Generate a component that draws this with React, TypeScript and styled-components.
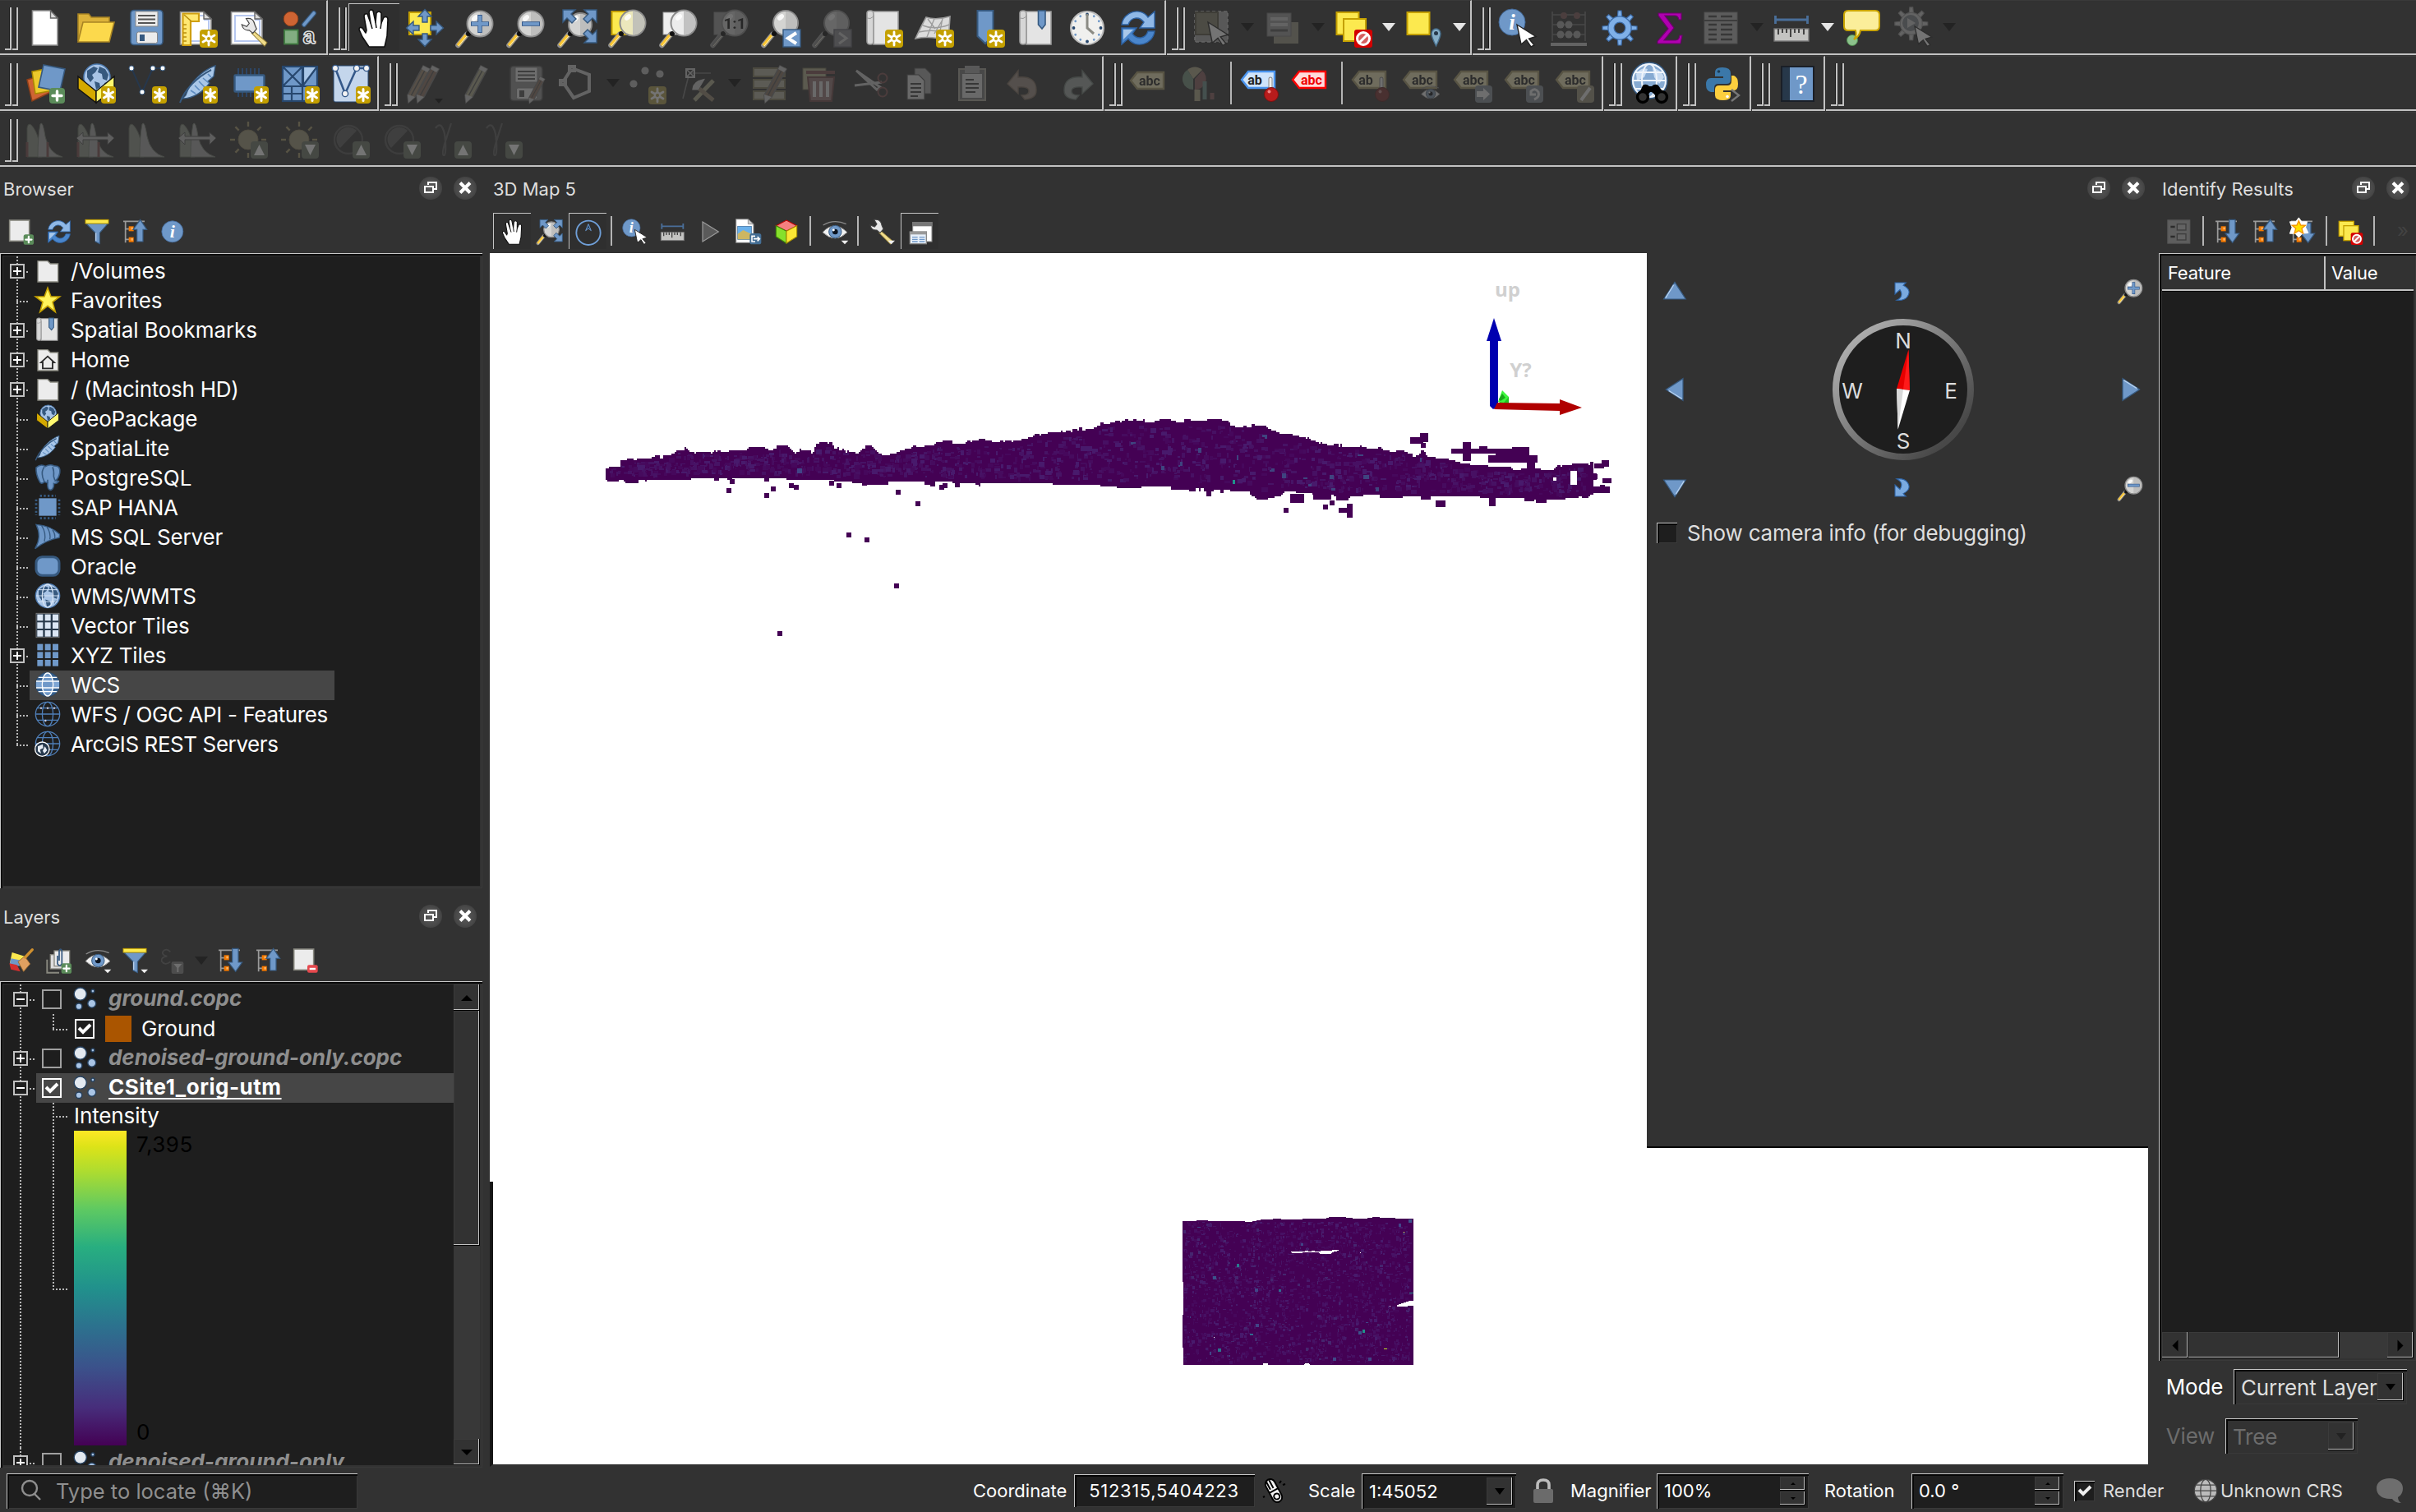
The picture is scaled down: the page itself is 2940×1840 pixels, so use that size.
import React from "react";
import styled, { createGlobalStyle, css } from "styled-components";

const C = {
  bg: "#323232",
  list: "#1e1e1e",
  light: "#c2c2c2",
  blue: "#6f98c8",
  navy: "#36597f",
  yellow: "#fce94f",
  gold: "#c4a000",
  text: "#dedede",
};

const Global = createGlobalStyle`
  *{box-sizing:border-box}
  html,body{margin:0;padding:0;background:${C.bg}}
  body{font-family:Inter,"Liberation Sans","DejaVu Sans",sans-serif;color:${C.text};overflow:hidden}
`;

const sunken = css`
  box-shadow: inset 1px 1px 0 #c8c8c8, inset 3px 3px 0 #060606, inset -1px -1px 0 #393939;
`;
const raised = css`
  background: ${C.bg};
  box-shadow: inset -1px -1px 0 #000, inset -2px -2px 0 ${C.light}, inset 1px 1px 0 #3b3b3b;
`;

/* ---------- icon artwork, drawn on a 48 unit grid ---------- */

const NewBadge = ({ x = 26, y = 26 }: { x?: number; y?: number }) => (
  <g transform={`translate(${x} ${y})`}>
    <rect width="22" height="22" rx="4" fill={C.gold} />
    <path d="M11 3v16M4 7l14 8M18 7l-14 8" stroke="#fff" strokeWidth="2.8" strokeLinecap="round" />
    <circle cx="11" cy="11" r="4.4" fill="#fff" />
    <circle cx="11" cy="11" r="2" fill={C.gold} />
  </g>
);
const StarBadge = ({ x = 30, y = 27 }: { x?: number; y?: number }) => (
  <g transform={`translate(${x} ${y})`}>
    <rect width="18" height="21" rx="4" fill={C.gold} />
    <path d="M9 3.5v14M3.5 7l11 7M14.5 7l-11 7" stroke="#fff" strokeWidth="3" strokeLinecap="round" />
  </g>
);
const GreenPlus = ({ x = 28, y = 28, s = 1 }: { x?: number; y?: number; s?: number }) => (
  <g transform={`translate(${x} ${y}) scale(${s})`}>
    <rect width="19" height="19" rx="4" fill="#5b8c5a" />
    <path d="M9.500 4v11M4 9.500h11" stroke="#fff" strokeWidth="3.400" strokeLinecap="round" />
  </g>
);
const NoBadge = () => (
  <g>
    <rect x="25" y="26" width="22" height="22" rx="3" fill="#d40000" />
    <circle cx="36" cy="37" r="7.500" fill="#d46060" stroke="#fff" strokeWidth="3" />
    <path d="M31 42l10-10" stroke="#fff" strokeWidth="3" />
  </g>
);
const Lens = ({ dim = false, cx = 29, cy = 19, r = 15.5, tint = "" }: { dim?: boolean; cx?: number; cy?: number; r?: number; tint?: string }) => (
  <g>
    <path d="M2.500 45L13 32" stroke={dim ? "#999" : "#8f8f8f"} strokeWidth="6.500" strokeLinecap="round" />
    <path d="M2 45.500L12 33" stroke={dim ? "#888" : "#fcc630"} strokeWidth="3.800" />
    <path d="M3 46L13 34" stroke="#fff3c0" strokeWidth="1" />
    <circle cx="15" cy="31" r="3" fill="#111" />
    <circle cx={cx} cy={cy} r={r} fill={tint || "#d4d4d2"} stroke="#8c8c8c" strokeWidth="2" />
    <path d={`M${cx} ${cy - r + 1}a${r - 1} ${r - 1} 0 0 1 0 ${2 * r - 2}z`} fill="#b8b8b8" opacity=".8" />
    <ellipse cx={cx - 6} cy={cy - 7} rx="4.500" ry="3" fill="#fff" opacity=".85" transform={`rotate(-40 ${cx - 6} ${cy - 7})`} />
  </g>
);
const Cursor = ({ x = 23, y = 20, s = 1 }: { x?: number; y?: number; s?: number }) => (
  <path transform={`translate(${x} ${y}) scale(${s})`} d="M0 0L23 14.500L14.500 17L21 25L17 27L11.500 18.500L5 24Z" fill="#fff" stroke="#222" strokeWidth="1.400" />
);
const Scroll = () => (
  <g>
    <path d="M9 4H42V44H12V9Z" fill="#e4e4e4" stroke="#9a9a9a" strokeWidth="1.600" />
    <path d="M4 6q0-3 4-3t4 4V40q0 4-4 4t-4-4z" fill="#d6d6d6" stroke="#9a9a9a" strokeWidth="1.600" />
    <path d="M4 12q4 2 8-2" stroke="#9a9a9a" fill="none" />
  </g>
);
const Page = () => (
  <g>
    <path d="M2.500 4.500H31L40 13V44H2.500Z" fill="#fff" stroke="#8a8a8a" strokeWidth="1.600" />
    <path d="M7 9h25v5h5v26H7z" fill="none" stroke="#b7c8f0" strokeWidth="2" />
    <path d="M31 4.500V13H40Z" fill="#d8d8d8" stroke="#666" strokeWidth="1.400" />
  </g>
);
const Globe = ({ cx = 24, cy = 24, r = 20, c = "#4f87c7", fill = "none" }: { cx?: number; cy?: number; r?: number; c?: string; fill?: string }) => (
  <g stroke={c} strokeWidth="2" fill="none">
    <circle cx={cx} cy={cy} r={r} fill={fill} />
    <ellipse cx={cx} cy={cy} rx={r * 0.45} ry={r} />
    <path d={`M${cx - r} ${cy}H${cx + r}M${cx - r * 0.85} ${cy - r * 0.5}H${cx + r * 0.85}M${cx - r * 0.85} ${cy + r * 0.5}H${cx + r * 0.85}`} />
  </g>
);
const Earth = ({ cx = 24, cy = 17, r = 16 }: { cx?: number; cy?: number; r?: number }) => (
  <g transform={`translate(${cx} ${cy}) scale(${r / 16})`}>
    <circle r="16" fill="#a8c4e6" stroke="#4b78ad" strokeWidth="1.500" />
    <path d="M-12-8l8-5 5 2-3 5-4 3 2 4-4 5-4-6zM3-13l7 3 4 7-2 7-5-2-1-6-5-2zM-3 5l6 2 1 5-5 3zM9 7l3-1-3 5z" fill="#36597f" />
  </g>
);
const Refresh = () => (
  <g stroke="#2d62a3" strokeWidth="1.400">
    <path d="M4 20C6 4 27-2 36 11L44 4V24H26L31 17C25 9 15 11 12 20Z" fill="#8fb8e6" />
    <path d="M44 28C42 44 21 50 12 37L4 44V24H22L17 31C23 39 33 37 36 28Z" fill="#4a86cc" />
    <path d="M6 38V26H18L6 38Z" fill="#a9c8ea" stroke="none" />
  </g>
);
const TreeLines = () => (
  <g>
    <path d="M3 5H42M7 5V44M7 19H16M7 38H16" stroke="#9a9a9a" strokeWidth="2.600" fill="none" />
    <rect x="13" y="14" width="9" height="9" fill="#f57900" />
    <rect x="13" y="34" width="9" height="9" fill="#f57900" />
    <rect x="17" y="16" width="4" height="4" fill="#fcb05e" />
    <rect x="17" y="36" width="4" height="4" fill="#fcb05e" />
  </g>
);
const Feather = () => (
  <g>
    <path d="M45 2C30 7 14 22 9 38L5 42C19 42 32 32 38 23L36 21L43 15Z" fill="#a9c7e8" stroke="#36597f" strokeWidth="1.400" />
    <path d="M2 47C8 30 24 15 40 7" stroke="#36597f" strokeWidth="2" fill="none" />
    <path d="M36 12l4 4M30 17l7 6M25 21l7 7M20 26l6 6M15 32l6 4" stroke="#5e8cc0" strokeWidth="1.600" />
  </g>
);
const Box = () => (
  <g>
    <Earth cx={25} cy={16} r={16} />
    <path d="M2 15L24 33V47L2 30Z" fill="#d4a900" stroke="#111" strokeWidth="1.400" />
    <path d="M46 15L24 33V47L46 30Z" fill="#fff86f" stroke="#111" strokeWidth="1.400" />
  </g>
);
const Funnel = () => (
  <g>
    <path d="M4 9H44L29 26V46L21 42V26Z" fill={C.blue} stroke={C.navy} strokeWidth="1.600" />
    <path d="M22 26V41" stroke="#b9d0ea" strokeWidth="2" />
    <rect x="3" y="2" width="42" height="7" fill={C.yellow} stroke={C.gold} strokeWidth="1.400" />
  </g>
);
const Eye = () => (
  <g>
    <path d="M2 12Q22 0 44 10" stroke="#8a8a8a" strokeWidth="2" fill="none" />
    <path d="M1 25Q22 2 46 25Q24 47 1 25Z" fill="#f2f2f2" stroke="#888" strokeWidth="1.500" />
    <circle cx="24" cy="24" r="11.500" fill={C.blue} stroke={C.navy} strokeWidth="1.500" />
    <circle cx="24" cy="24" r="5" fill="#0b1320" />
    <circle cx="21" cy="21" r="2.200" fill="#fff" />
  </g>
);
const MiniArrow = () => <path d="M35 40H48L41.500 47Z" fill="#eee" />;
const Hand = () => (
  <g>
    <path d="M17 47L9 35L5 26Q5 22 9 24L13 30L14 27L11 10Q11 6 15 7L19 18L17 5Q18 0 22 3L25 17L26 6Q29 2 32 6V18L35 11Q40 9 40 14L39 34L36 47Z" fill="#fff" stroke="#111" strokeWidth="1.600" strokeLinejoin="round" />
    <path d="M19 18L21 25M25 17L26 24M32 18L31 25" stroke="#111" strokeWidth="1.500" />
  </g>
);
const Wrench = () => (
  <g>
    <path d="M22 22L44 41L40 47L19 26Z" fill="#f1dd8a" stroke="#8d7a35" strokeWidth="1.400" />
    <path d="M10 2Q22 0 24 12L27 19L21 26L15 21Q5 22 3 12L11 15L15 10Z" fill="#e8e8e8" stroke="#444" strokeWidth="1.600" />
  </g>
);
const FullArrows = () => (
  <g fill={C.blue} stroke={C.navy} strokeWidth="1.400">
    <path d="M6 2H21L16 7L22 13L17 18L11 12L6 17Z" />
    <path d="M47 2V17L42 12L36 18L31 13L37 7L32 2Z" />
    <path d="M47 42H32L37 37L31 31L36 26L42 32L47 27Z" />
  </g>
);
const Folder = () => <path d="M6 7H24L29 12H43V45H6Z" fill="#ececec" stroke="#88887f" strokeWidth="2" />;
const Tag = ({ fill = "#fbe98a", stroke = "#b59c3a", color = "#222", text = "abc" }: { fill?: string; stroke?: string; color?: string; text?: string }) => (
  <g>
    <path d="M1 19L9 9H41V29H9Z" fill={fill} stroke={stroke} strokeWidth="2.400" />
    <text x={text === "ab" ? 17 : 24} y="24.500" fontSize="16" fontWeight="700" textAnchor="middle" fill={color} fontFamily="Roboto, sans-serif">{text}</text>
  </g>
);
const Pin = () => (
  <g>
    <path d="M36 18V34" stroke="#888" strokeWidth="5" strokeLinecap="round" />
    <path d="M36 18V34" stroke="#eee" strokeWidth="3" strokeLinecap="round" />
    <circle cx="37" cy="37" r="8.500" fill="#b71c1c" stroke="#7c1010" />
    <circle cx="34.500" cy="33.500" r="2" fill="#f08080" />
  </g>
);
const Pencil = ({ x = 0, c = "#b58a5a" }: { x?: number; c?: string }) => (
  <g transform={`translate(${x} 0)`}>
    <path d="M28 2L36 6L18 40L10 47L9 38Z" fill={c} stroke="#777" strokeWidth="1.600" />
    <path d="M9 37L18 40L10 47Z" fill="#ccc" />
    <path d="M32 4L13.500 38" stroke="#555" strokeWidth="1.400" />
    <path d="M28 2L36 6L33 10L26 6Z" fill="#ccc" />
  </g>
);
const Gear = ({ c = "#6f9fd8", s = "#3c6aa5" }: { c?: string; s?: string }) => (
  <g>
    {[0, 45, 90, 135, 180, 225, 270, 315].map((a) => (
      <path key={a} transform={`rotate(${a} 24 24)`} d="M21 14L22 3H26L27 14Z" fill={c} stroke={s} strokeWidth="1.200" />
    ))}
    <circle cx="24" cy="24" r="10.500" fill="none" stroke={s} strokeWidth="8.500" />
    <circle cx="24" cy="24" r="10.500" fill="none" stroke={c} strokeWidth="6" />
  </g>
);
const Ruler = () => (
  <g>
    <path d="M3 14H43M3.500 9V19M42.500 9V19" stroke="#4a6f9a" strokeWidth="2.800" />
    <rect x="2" y="25" width="42" height="15" fill="#c4c4c2" stroke="#777" strokeWidth="1.400" />
    <path d="M7 25v7M12 25v5M17 25v5M22 25v10M27 25v5M32 25v5M38 25v7" stroke="#444" strokeWidth="2" />
  </g>
);
const Info = () => (
  <g>
    <circle cx="17" cy="17" r="16" fill={C.blue} stroke="#42699a" strokeWidth="1" />
    <text x="17" y="26" fontSize="27" fontStyle="italic" fontWeight="700" textAnchor="middle" fill="#fff" fontFamily="Liberation Serif, serif">i</text>
  </g>
);
const Floppy = () => (
  <g>
    <rect x="4" y="2.500" width="39" height="42" rx="4" fill={C.blue} stroke={C.navy} strokeWidth="1.600" />
    <rect x="10" y="4" width="27" height="18" fill="#ececec" stroke="#888" />
    <path d="M13 9H34M13 13.500H34M13 18H34" stroke="#555" strokeWidth="1.800" />
    <rect x="11.500" y="29" width="25" height="13.500" rx="2" fill="#ececec" stroke="#888" />
    <rect x="15" y="32" width="6" height="8" fill="#36597f" />
  </g>
);
const Hist = ({ cut = false, arrow = false }: { cut?: boolean; arrow?: boolean }) => (
  <g transform="translate(-1 0)">
    <path d="M3 45V10Q4 3 8 6Q14 12 17 24Q20 36 21 45Z" fill="#8a9a80" stroke="#5f6c50" />
    <path d="M16 45Q16 20 19 5Q22 0 25 20Q29 40 46 45Z" fill="#aaa" stroke="#6f7f66" />
    {cut && <path d="M3 27V45M28 27V45" stroke="#a04646" strokeWidth="3" />}
    {arrow && <path d="M1 22L9 15V20H39V15L47 22L39 30V24H9V30Z" fill="#bbb" stroke="#555" />}
  </g>
);
const UpDown = ({ down = false }: { down?: boolean }) => (
  <g>
    <rect x="26" y="26" width="21" height="21" rx="4" fill="#667a5c" />
    <path d={down ? "M30 30H43L36.500 43Z" : "M30 43H43L36.500 30Z"} fill="#fff" />
  </g>
);
const Sun = ({ down = false }: { down?: boolean }) => (
  <g>
    {[0, 45, 90, 135, 180, 225, 270, 315].map((a) => (
      <path key={a} transform={`rotate(${a} 23 24)`} d="M23 2V8" stroke="#b59a3d" strokeWidth="2.400" />
    ))}
    <circle cx="23" cy="24" r="12" fill="#a89860" stroke="#97803a" />
    <UpDown down={down} />
  </g>
);
const Contrast = ({ down = false }: { down?: boolean }) => (
  <g>
    <circle cx="21" cy="24" r="17" fill="none" stroke="#565656" strokeWidth="2.400" />
    <path d="M11 34A14.500 14.500 0 0 1 31 13Z" fill="#5c5c5c" />
    <UpDown down={down} />
  </g>
);
const Gamma = ({ down = false }: { down?: boolean }) => (
  <g>
    <path d="M3 10Q10 0 14 17L15 26Q10 42 13 43Q16 43 15 26L22 4" fill="none" stroke="#5c5c5c" strokeWidth="2.200" />
    <UpDown down={down} />
  </g>
);
const Undo = () => <path d="M3 24L16 8V16Q38 14 38 32Q38 42 24 43L20 38Q30 38 29 32Q28 27 16 28V36Z" fill="#a98a78" stroke="#8f6a4c" strokeWidth="1.400" />;
const Squares = () => (
  <g fill={C.yellow} stroke={C.gold} strokeWidth="2">
    <rect x="3.500" y="5" width="27" height="27" />
    <rect x="12" y="13" width="27" height="27" />
  </g>
);
const Triangle = ({ rot }: { rot: number }) => (
  <g transform={`rotate(${rot} 24 24)`}>
    <path d="M24 8L44 39H4Z" fill={C.blue} stroke={C.navy} strokeWidth="1.800" />
    <path d="M22 13L7 37" stroke="#b9d3f0" strokeWidth="2" />
  </g>
);
const CubeGrid = ({ fill = C.blue, s = "none" }: { fill?: string; s?: string }) => (
  <g fill={fill} stroke={s} strokeWidth="1.400">
    {[0, 1, 2].map((r) => [0, 1, 2].map((c) => <rect key={`${r}${c}`} x={5 + c * 14} y={4 + r * 14.500} width="10.500" height="11.500" />))}
  </g>
);

const art: Record<string, React.ReactNode> = {
  newFile: (
    <g>
      <path d="M8.500 3H30.500L39 12V45H8.500Z" fill="#fff" stroke="#8e8e8e" strokeWidth="1.600" />
      <path d="M30.500 3V12H39Z" fill="#ddd" stroke="#666" strokeWidth="1.400" />
    </g>
  ),
  open: (
    <g stroke="#a88423" strokeWidth="1.600">
      <path d="M2 40V7H15L18 11H40V17" fill="#dcb23a" />
      <path d="M8 17H46L40 41H2Z" fill="#fcd94c" />
    </g>
  ),
  save: <Floppy />,
  newLayout: (
    <g>
      <Page />
      <path d="M5.500 6.500H25V16H15V45H5.500Z" fill="#ffe872" stroke="#d0a010" strokeWidth="2.200" />
      <path d="M6 20h4M6 25h4M6 30h4M6 35h4M6 40h4M7 8l9 8" stroke="#b98d0d" strokeWidth="1.600" />
      <NewBadge />
    </g>
  ),
  layouts: (
    <g>
      <Page />
      <g transform="translate(13 11) scale(.75)"><Wrench /></g>
    </g>
  ),
  style: (
    <g>
      <circle cx="13" cy="13" r="8.800" fill="#cf6433" stroke="#8f3f18" />
      <path d="M29 20L41 6" stroke={C.navy} strokeWidth="6" strokeLinecap="round" />
      <path d="M29 20L41 6" stroke={C.blue} strokeWidth="3.600" strokeLinecap="round" />
      <rect x="5" y="26.500" width="16.500" height="17" fill="#82ad82" stroke="#3f7a40" strokeWidth="1.800" />
      <text x="35" y="43" fontSize="27" fontWeight="700" textAnchor="middle" fill="#333" stroke="#ddd" strokeWidth="1.600" fontFamily="Liberation Sans, sans-serif">a</text>
    </g>
  ),
  hand: <Hand />,
  panSel: (
    <g>
      <rect x="5" y="5" width="26" height="27" fill={C.yellow} stroke={C.gold} strokeWidth="2" />
      <g fill={C.blue} stroke={C.navy} strokeWidth="1.400">
        {[0, 90, 180, 270].map((a) => <path key={a} transform={`rotate(${a} 24 24)`} d="M24 1.500L32 10H27V17H21V10H16Z" />)}
      </g>
    </g>
  ),
  zoomIn: <g><Lens /><path d="M29 8V30M18 19H40" stroke="#35598a" strokeWidth="5.600" /><path d="M29 9V29M19 19H39" stroke={C.blue} strokeWidth="3.800" /></g>,
  zoomOut: <g><Lens /><path d="M18 19H40" stroke="#35598a" strokeWidth="5.600" /><path d="M19 19H39" stroke={C.blue} strokeWidth="3.800" /></g>,
  zoomFull: <g><Lens cx={27} cy={20} r={14} /><FullArrows /></g>,
  zoomSel: <g><rect x="3.500" y="4" width="26" height="28" fill={C.yellow} stroke={C.gold} strokeWidth="2" /><Lens tint="#ece8bc" cy={18} /></g>,
  zoomLayer: <g><rect x="4" y="5" width="26" height="27" fill="#eee" stroke="#999" /><Lens tint="#ececec" cy={18} /></g>,
  zoomNative: <g><rect x="4" y="5" width="26" height="27" fill="#999" stroke="#888" /><Lens dim cy={18} /><text x="29" y="25" fontSize="19" fontWeight="700" textAnchor="middle" fill="#111" fontFamily="Roboto, sans-serif">1:1</text></g>,
  zoomLast: <g><Lens cy={18} r={15} /><rect x="26" y="26" width="21" height="21" fill={C.blue} stroke={C.navy} strokeWidth="1.400" /><path d="M42 30L32 36.500L42 43" fill="none" stroke="#fff" strokeWidth="4" /></g>,
  zoomNext: <g><Lens dim cy={18} r={15} /><rect x="26" y="26" width="21" height="21" fill="#889" stroke="#667" strokeWidth="1.400" /><path d="M32 30L41 36.500L32 43" fill="none" stroke="#ccc" strokeWidth="3" /></g>,
  newMap: <g><Scroll /><NewBadge /></g>,
  new3d: (
    <g>
      <path d="M14 11Q26 15 43 10L41 40Q20 33 1 37Q8 22 14 11Z" fill="#dcdcdc" stroke="#9c9c9c" strokeWidth="1.600" />
      <path d="M24 13Q20 22 15 35M34 12Q32 24 29 36M10 21Q24 27 42 20M5 29Q22 25 41 30M16 13L25 25M34 14L24 31" fill="none" stroke="#9c9c9c" strokeWidth="1.400" />
      <NewBadge />
    </g>
  ),
  newBookmark: <g><path d="M14.500 3H33.500V34L24 43L14.500 34Z" fill={C.blue} stroke={C.navy} strokeWidth="2" /><NewBadge /></g>,
  bookmarks: <g><Scroll /><path d="M26.500 3H35V20L31 25L26.500 20Z" fill={C.blue} stroke={C.navy} strokeWidth="1.600" /></g>,
  clock: (
    <g>
      <circle cx="24" cy="24" r="20" fill="#f0f0ee" stroke="#bbb" strokeWidth="2" />
      {[...Array(12)].map((_, i) => <circle key={i} transform={`rotate(${i * 30} 24 24)`} cx="24" cy="7.500" r={i % 3 ? 1.400 : 1.900} fill={i % 3 ? C.blue : "#27476e"} />)}
      <path d="M24 7V24L32 31" fill="none" stroke="#8b8b84" strokeWidth="3" />
    </g>
  ),
  refresh: <Refresh />,
  select: <g><rect x="3" y="4" width="40" height="37" fill="#aaa" stroke="#ccc" strokeWidth="1.600" strokeDasharray="4 3" /><rect x="4" y="5" width="27" height="27" fill="#8a8256" stroke="#5f5630" strokeWidth="2" /><Cursor x={19} y={17} s={1.05} /></g>,
  form: <g><rect x="13" y="17" width="30" height="26" fill="#9c9574" /><rect x="5" y="6" width="29" height="28" fill="#999" stroke="#777" /><path d="M9 13H30M9 20H30" stroke="#ccc" strokeWidth="4" /><path d="M9 27H30" stroke="#555" strokeWidth="3" /></g>,
  deselect: <g><Squares /><NoBadge /></g>,
  selectLoc: <g><rect x="3.500" y="5" width="27" height="27" fill={C.yellow} stroke={C.gold} strokeWidth="2" /><path d="M38.500 46Q33 35 33 31A5.500 6 0 0 1 44 31Q44 35 38.500 46Z" fill="#86aec8" stroke="#486f8c" strokeWidth="1.400" /><circle cx="38.500" cy="30.500" r="2.500" fill="#27384a" /></g>,
  identify: <g><Info /><Cursor /></g>,
  abacus: <g stroke="#777" strokeWidth="1.600" fill="#aaa"><path d="M4 4V40M44 4V40M4 8H44M4 20H44M4 32H44" /><path d="M2 44H46" strokeWidth="4" stroke="#ccc" /><g stroke="none"><circle cx="18" cy="9" r="4" fill="#a05050" /><circle cx="34" cy="9" r="4" fill="#a05050" /><circle cx="14" cy="20" r="4.500" /><circle cx="24" cy="20" r="4.500" /><circle cx="14" cy="32" r="4.500" /><circle cx="24" cy="32" r="4.500" /><circle cx="34" cy="32" r="4.500" /></g></g>,
  gear: <Gear c="#7fb0e8" />,
  sigma: <path d="M9 6H37V14H34Q33 9 29 9H17L28 24L16 39H30Q34 39 35 33H38L36 43H8V40L21 25L9 9Z" fill="#b000b0" stroke="#6c006c" strokeWidth="1.200" />,
  table: <g><rect x="3" y="5" width="40" height="38" fill="#b5b5b5" stroke="#888" /><path d="M3 15H43" stroke="#555" strokeWidth="2" /><path d="M8 10H18M23 10H37M8 20H18M23 20H37M8 26H18M23 26H37M8 32H18M23 32H37M8 38H18M23 38H37" stroke="#444" strokeWidth="2.600" /></g>,
  ruler: <Ruler />,
  tips: <g><circle cx="11" cy="39" r="6.500" fill="#8cc28c" stroke="#4e8a4e" /><path d="M6 3H39Q44 3 44 8V22Q44 27 39 27H21Q20 34 13 38Q17 33 15 27H6Q1 27 1 22V8Q1 3 6 3Z" fill="#fbee9a" stroke="#c9a400" strokeWidth="2" /></g>,
  action: <g><g transform="translate(-2 -4) scale(.95)"><Gear c="#ccc" s="#999" /></g><circle cx="20" cy="18" r="10" fill="#7b8590" /><path d="M16 12L26 18L16 24Z" fill="#ccc" /><Cursor x={25} y={22} s={0.9} /></g>,

  dataSource: <g><path d="M2 19L26 12L31 34L8 45Z" fill="#cf6433" stroke="#8b3e19" strokeWidth="1.500" /><path d="M8 9L30 5L34 32L12 36Z" fill="#ecc92c" stroke="#a98900" strokeWidth="1.500" /><path d="M22 1L48 6L42 33L16 28Z" fill={C.blue} stroke={C.navy} strokeWidth="1.600" /><GreenPlus x={29} y={29} /></g>,
  newGpkg: <g><Box /><StarBadge /></g>,
  newShp: <g><path d="M5 5L18 34L31 5H43" fill="none" stroke="#26374c" strokeWidth="2" />{[[5, 5], [31, 5], [43, 5], [18, 34]].map(([x, y]) => <circle key={x} cx={x} cy={y} r="3" fill="#fff" stroke="#36597f" strokeWidth="1" />)}<StarBadge /></g>,
  newSpl: <g><Feather /><StarBadge /></g>,
  newScratch: <g><path d="M11 5V40M16 5V40M21 5V40M26 5V40M31 5V40M36 5V40" stroke="#2d486b" strokeWidth="1.800" /><rect x="6.500" y="13.500" width="36" height="20" rx="1" fill={C.blue} stroke={C.navy} strokeWidth="2.400" /><StarBadge /></g>,
  newMesh: <g stroke="#27476e" strokeWidth="2.200"><rect x="3" y="3" width="42" height="42" fill={C.blue} /><path d="M28 26V3H45" fill="#a9c7e8" /><path d="M3 27H45M27 3V45M3 3L27 27M27 3L3 27M45 3L27 27M3 36H27M14 27V45" fill="none" /><g stroke="none"><StarBadge /></g></g>,
  newVirtual: <g><rect x="3" y="2" width="42" height="44" rx="2" fill="#c4d6ec" stroke="#27476e" /><path d="M5 5L17 36L31 5H43V9" fill="none" stroke="#35598a" strokeWidth="2.600" />{[[5, 5], [31, 5], [43, 5], [17, 36]].map(([x, y]) => <circle key={x} cx={x} cy={y} r="3.600" fill="#f4f4f4" stroke="#35598a" strokeWidth="1.400" />)}<StarBadge /></g>,
  pencils: <g><Pencil x={-6} /><Pencil x={5} c="#a57050" /><path d="M36 42H46L41 48Z" fill="#000" /></g>,
  pencil: <Pencil x={2} c="#b5ad70" />,
  saveEdits: <g><g style={{ filter: "grayscale(1)" }}><Floppy /></g><g transform="translate(20 14) scale(.72)"><Pencil c="#a57050" /></g></g>,
  digitize: <g fill="none" stroke="#ccc" strokeWidth="4"><path d="M17 5L38 13L38 33L19 41L6 22Z" /><rect x="14" y="3" width="6" height="5" fill="#999" /><rect x="3" y="20" width="6" height="5" fill="#999" /></g>,
  movePts: <g><circle cx="20" cy="8" r="4.600" fill="#bbb" /><circle cx="38" cy="12" r="4.600" fill="#bbb" /><circle cx="6" cy="24" r="4.600" fill="#bbb" /><g transform="translate(-2 0)"><NewBadge y={27} /></g></g>,
  vertex: <g><path d="M4 42L11 14M14 11H38" stroke="#777" strokeWidth="1.600" /><rect x="8" y="6" width="10" height="10" fill="none" stroke="#ccc" strokeWidth="2" /><path d="M9 7l8 8M17 7l-8 8" stroke="#ccc" strokeWidth="1.600" /><path d="M41 20L18 44" stroke="#b5ad70" strokeWidth="5" /><path d="M24 30L41 44" stroke="#a08455" strokeWidth="5" /><path d="M17 30Q18 22 28 20L22 30Z" fill="#ccc" stroke="#ccc" strokeWidth="3" /></g>,
  multiedit: <g><path d="M4 5H42V15H4ZM4 19H42V29H4ZM4 33H42V43H4Z" fill="#b9b48a" stroke="#8a8040" strokeWidth="2" /><Pencil x={8} c="#9b6f4f" /></g>,
  trash: <g><rect x="2" y="5" width="28" height="26" fill="#b9b06e" stroke="#777038" /><path d="M8 16H40L37 45H11Z" fill="#b07070" stroke="#8c3f3f" strokeWidth="2" /><path d="M6 10H41" stroke="#a34a4a" strokeWidth="4" /><path d="M16 21V40M24 21V40M32 21V40" stroke="#ddd" strokeWidth="4" /></g>,
  cut: <g fill="none"><path d="M5 8L34 28L30 31ZM3 26L36 22" stroke="#ccc" strokeWidth="3" /><circle cx="37" cy="17" r="5.500" stroke="#a34a4a" strokeWidth="2" /><circle cx="37" cy="34" r="5.500" stroke="#a34a4a" strokeWidth="2" /></g>,
  copy: <g fill="#aaa" stroke="#555" strokeWidth="1.200"><path d="M14 5H27L34 12V36H14Z" /><path d="M5 13H19L26 20V43H5Z" fill="#ddd" /><path d="M9 24H22M9 29H22M9 34H22M9 39H18" stroke="#444" strokeWidth="2" /></g>,
  paste: <g><rect x="6" y="6" width="32" height="38" fill="#777" stroke="#aaa78f" strokeWidth="2" /><rect x="13" y="2" width="18" height="9" fill="#aaa" /><rect x="10" y="12" width="24" height="29" fill="#ddd" /><path d="M14 19H24M14 24H30M14 29H30M14 34H26" stroke="#444" strokeWidth="2" /></g>,
  undo: <Undo />,
  redo: <path transform="translate(48 0) scale(-1 1)" d="M3 24L16 8V16Q38 14 38 32Q38 42 24 43L20 38Q30 38 29 32Q28 27 16 28V36Z" fill="#98a8a0" stroke="#6a8074" strokeWidth="1.400" />,
  label: <g transform="translate(0 1)"><Tag /></g>,
  diagram: <g><path d="M15 18L8 7A13 13 0 0 1 26 7Z" fill="#b9a968" /><path d="M15 18L8 7A13 13 0 0 0 15 31Z" fill="#5f9a70" /><path d="M17 18L26 8A13 13 0 0 1 17 31Z" fill="#a55" /><path d="M20 45V31" stroke="#b9a968" strokeWidth="7" /><path d="M29 43V21" stroke="#4c9a8a" strokeWidth="5" /><path d="M38 43V35" stroke="#a55" strokeWidth="5" /></g>,
  labelPin: <g><Tag fill="#cfe4fb" stroke="#4a94ee" text="ab" /><Pin /></g>,
  labelRed: <Tag fill="#ffdada" stroke="#f00" color="#f00000" />,
  labelMove0: <g><Tag text="ab" /><Pin /></g>,
  labelEye: <g><Tag /><g transform="translate(22 24) scale(.5)"><Eye /></g></g>,
  labelMove: <g><Tag /><rect x="26" y="26" width="21" height="21" rx="4" fill="#7d8fa0" /><path d="M28 33H36V29L44 36.500L36 44V40H28Z" fill="#eee" /></g>,
  labelRot: <g><Tag /><rect x="26" y="26" width="21" height="21" rx="4" fill="#7d8fa0" /><path d="M36 43Q43 40 41 34Q37 28 32 33V37H38" fill="none" stroke="#eee" strokeWidth="3" /></g>,
  labelEdit: <g><Tag /><rect x="26" y="26" width="21" height="21" rx="4" fill="#a09460" /><path d="M42 29L31 44" stroke="#eee" strokeWidth="4" /></g>,
  metasearch: <g><circle cx="24" cy="20" r="22" fill="#86aad2" stroke={C.navy} strokeWidth="1.500" /><path d="M8 12Q14 3 22 6L18 16L9 20ZM28 5Q38 6 42 16L36 24L30 16Z" fill="#c9dcf2" /><Globe cx={24} cy={20} r={20} c="#f0f5fb" /><path d="M9 42L16 26Q20 23 24 27H27Q31 23 35 26L46 42L34 40L27 34H25L19 42Z" fill="#000" /><circle cx="16" cy="40" r="6.500" fill="#333" stroke="#000" strokeWidth="3.400" /><circle cx="39" cy="40" r="6.500" fill="#333" stroke="#000" strokeWidth="3.400" /></g>,
  python: <g><path d="M23 4C14 4 14 8 14 12V15H24V17H9Q3 17 3 25T9 34H13V29Q13 24 18 24H28Q33 24 33 19V11Q33 4 23 4Z" fill="#3b78a9" /><circle cx="18.500" cy="9" r="1.800" fill="#1d3c55" /><path d="M24 44C33 44 33 40 33 37V34H24V32H37Q42 32 42 24T37 14H34V20Q34 26 29 26H19Q14 26 14 31V38Q14 44 24 44Z" fill="#fccf3e" /><circle cx="29" cy="39.500" r="1.800" fill="#fff" /><path d="M34 31L43 38L34 45" fill="none" stroke="#777" strokeWidth="2.400" /></g>,
  help: <g><rect x="5" y="3" width="39" height="42" fill={C.blue} stroke="#1a1f27" strokeWidth="2" /><rect x="6" y="4" width="9" height="40" fill="#27384a" /><text x="29" y="36" fontSize="34" textAnchor="middle" fill="#fff" fontFamily="Liberation Serif, serif">?</text></g>,

  hist1: <Hist cut />, hist2: <Hist cut arrow />, hist3: <Hist />, hist4: <Hist arrow />,
  sunUp: <Sun />, sunDown: <Sun down />, conUp: <Contrast />, conDown: <Contrast down />, gamUp: <Gamma />, gamDown: <Gamma down />,

  addLayer: <g><rect x="2.500" y="3" width="36" height="38" fill="#ececec" stroke="#88887f" strokeWidth="2.400" /><GreenPlus x={28} y={29} s={0.98} /></g>,
  removeLayer: <g><rect x="2.500" y="3" width="36" height="38" fill="#ececec" stroke="#88887f" strokeWidth="2.400" /><rect x="27" y="32" width="19" height="14" rx="3" fill="#e5484d" /><path d="M31 39H42" stroke="#fff" strokeWidth="3.600" /></g>,
  funnel: <Funnel />,
  funnelMenu: <g><Funnel /><MiniArrow /></g>,
  collapse: <g><TreeLines /><path d="M34 2L46 20H39V42H28V20H21Z" fill={C.blue} stroke={C.navy} strokeWidth="1.800" /></g>,
  expand: <g><TreeLines /><path d="M28 2H39V27H46L34 44L21 27H28Z" fill={C.blue} stroke={C.navy} strokeWidth="1.800" /></g>,
  expandNew: <g><TreeLines /><path d="M28 8H39V27H46L34 44L21 27H28Z" fill={C.blue} stroke={C.navy} strokeWidth="1.800" /><path d="M17 -1L22 6L32 6L29 16L34 26L23 27L17 34L11 27L1 27L5 16L1 6L12 6Z" fill="#fff" stroke="#fff" strokeWidth="2" strokeLinejoin="round" /><path d="M17 4L20.500 12L29 12.500L22.500 18L25 27L17 22L9 27L11.500 18L5 12.500L13.500 12Z" fill="#ffe000" stroke="#f59300" strokeWidth="2" /></g>,
  infoBig: <g transform="translate(3 3) scale(1.22)"><Info /></g>,
  brush: <g><path d="M7 9L30 16L24 34L3 28Z" fill={C.yellow} /><path d="M5 20L26 24L20 34L3 30Z" fill={C.blue} /><path d="M2 29L16 32L22 44L5 40Z" fill="#d32f2f" /><path d="M18 26L30 16L40 30L28 44Z" fill="#e0a060" stroke="#9a6a30" strokeWidth="1.400" /><path d="M31 18L44 4" stroke="#d0902f" strokeWidth="5" strokeLinecap="round" /></g>,
  addGroup: <g><path d="M2 22V46H24" fill="none" stroke="#88887f" strokeWidth="3" /><rect x="8" y="13" width="28" height="26" fill="#ddd" stroke="#88887f" strokeWidth="2" /><rect x="15" y="6" width="28" height="28" fill="#ececec" stroke="#88887f" strokeWidth="2" /><path d="M21 15V30Q25 36 29 30V6Q26 0 24 6V24" fill="none" stroke={C.navy} strokeWidth="2.600" /><GreenPlus x={28} y={29} s={0.98} /></g>,
  eye: <g transform="translate(2 0)"><Eye /><MiniArrow /></g>,
  epsilon: <g><path d="M20 8Q12 0 6 8Q4 14 14 16Q2 18 4 25Q10 34 20 26" fill="none" stroke="#666" strokeWidth="2.600" /><rect x="22" y="26" width="22" height="22" rx="3" fill="#888" /><path d="M26 30H41L35 37V45H32V37Z" fill="#eee" /></g>,
  compassTool: <g><circle cx="24" cy="26" r="22" fill="none" stroke="#6f9fd8" strokeWidth="2.800" /><path d="M24 10L29 22L24 18L19 22Z" fill="#26415f" stroke="#6f9fd8" strokeWidth="1.400" /></g>,
  play: <path d="M9 6L38 24L9 42Z" fill="#5a5a5a" stroke="#9a9a9a" strokeWidth="1.800" />,
  saveImg: <g><path d="M1 1H23L33 10V44H1Z" fill="#fff" stroke="#888" strokeWidth="1.600" /><path d="M23 1V10H33Z" fill="#ccc" stroke="#777" /><rect x="4" y="14" width="25" height="24" fill="#6ab0ea" stroke="#3a6a9a" /><path d="M4 28L14 21L29 28V38H4Z" fill="#cdb662" /><rect x="26" y="27" width="21" height="20" rx="4" fill="#456f95" /><path d="M36 32H30V42H36M33 37H44M40 33L44 37L40 41" fill="none" stroke="#fff" strokeWidth="2.400" /></g>,
  cube: <g strokeWidth="1.600"><path d="M24 3L43 13L24 23L5 13Z" fill="#f48080" stroke="#b00" /><path d="M5 13L24 23V45L5 33Z" fill="#86e02c" stroke="#3f8a08" /><path d="M43 13L24 23V45L43 33Z" fill="#fbe634" stroke="#a88f00" /></g>,
  wrench: <g><Wrench /><MiniArrow /></g>,
  dock: <g><rect x="10" y="7" width="35" height="35" fill="#fff" stroke="#888" strokeWidth="1.600" /><rect x="9" y="6" width="37" height="8" fill="#777" /><rect x="5" y="24" width="30" height="22" fill="#e8f0fa" stroke="#888" strokeWidth="2" /><rect x="5" y="24" width="30" height="5" fill="#999" /><path d="M9 34H19M22 34H32M9 38H19M22 38H32M9 42H19M22 42H32" stroke={C.blue} strokeWidth="2" /></g>,
  idForm: <g><rect x="3" y="3" width="40" height="42" fill="#bbb" stroke="#aaa" strokeWidth="2" /><rect x="20" y="10" width="16" height="11" fill="#ccc" stroke="#555" strokeWidth="2" /><rect x="20" y="28" width="16" height="11" fill="#ccc" stroke="#555" strokeWidth="2" /><path d="M8 15H16M8 33H16" stroke="#222" strokeWidth="4" /></g>,

  folder: <Folder />,
  home: <g><Folder /><path d="M24 19L36 30H33V41H15V30H12Z" fill="none" stroke="#2b2b2b" strokeWidth="2.800" /></g>,
  star: <path d="M24 2L30 18L46 18L33 28L38 46L24 35L10 46L15 28L2 18L18 18Z" fill="#fff45c" stroke={C.gold} strokeWidth="2.400" />,
  gpkg: <g transform="translate(2 0) scale(.92)"><Box /></g>,
  feather: <Feather />,
  elephant: <g fill={C.blue} stroke={C.navy} strokeWidth="2.400"><path d="M3 6Q12-2 20 4Q28-1 36 3Q48 2 46 16Q44 26 38 30L44 31Q41 36 35 35V40Q33 48 28 47Q23 45 24 34L18 32Q12 38 9 31Q2 18 3 6Z" /><path d="M18 5Q12 12 15 24L18 32M33 5Q36 12 35 22L37 29M24 34V28" fill="none" /></g>,
  chip: <g><rect x="8" y="8" width="32" height="32" fill={C.blue} /><path d="M10 3.500H39M10 44.500H39" stroke={C.navy} strokeWidth="4" strokeDasharray="3.500 3.500" /><path d="M3 10V39M45 10V39" stroke={C.navy} strokeWidth="4" strokeDasharray="3.500 3.500" /></g>,
  mssql: <g fill={C.blue} stroke={C.navy} strokeWidth="2"><path d="M3 2Q30 4 46 20L45 26Q22 30 1 46Q14 24 3 2Z" /><path d="M13 4Q22 18 18 33M23 7Q30 18 28 29M33 12Q38 19 37 27" fill="none" /></g>,
  oracle: <rect x="3" y="7" width="42" height="34" rx="11" fill={C.blue} stroke={C.navy} strokeWidth="4.500" />,
  wms: <g><Earth cx={24} cy={24} r={22} /><ellipse cx="24" cy="24" rx="10" ry="21" fill="none" stroke="#d6e4f5" strokeWidth="2" /><path d="M3 24H45M6 13H42M6 35H42" stroke="#d6e4f5" strokeWidth="1.400" /></g>,
  vtiles: <g><rect x="3" y="2" width="42" height="44" fill="#27384a" stroke="#777" strokeWidth="1.400" /><CubeGrid fill="#dbe6f4" /></g>,
  xyz: <CubeGrid />,
  wcs: <g><circle cx="24" cy="24" r="22" fill="#37618f" stroke="#26415f" /><path d="M3 18H45V30H3Z" fill="#7ea6d4" /><ellipse cx="24" cy="24" rx="10" ry="21" fill={C.blue} stroke="#fff" strokeWidth="2" /><path d="M3 18H45M3 30H45M7 11H41M7 37H41" stroke="#fff" strokeWidth="2" /></g>,
  wfs: <g><Globe r={22} c="#4f7fb8" />{[[12, 13], [24, 13], [36, 13], [20, 36]].map(([x, y]) => <circle key={x} cx={x} cy={y} r="1.800" fill="#ccd" />)}</g>,
  arcgis: <g><Globe r={22} c="#4f7fb8" /><g transform="translate(14 34)"><circle r="13" fill="#26384c" stroke="#fff" strokeWidth="2" /><path d="M-8-5L1-9L2-2L-4 1L-2 8L-8 4ZM5-5L9 2L4 8L1 3Z" fill="#e8eef5" /></g></g>,
  points: <g stroke="#26415f" strokeWidth="2.400"><circle cx="15" cy="13" r="13" fill="#e3e9f0" /><circle cx="39" cy="33" r="8.500" fill="#a9c4e4" /><circle cx="12" cy="39" r="6.500" fill="#a9c4e4" /><circle cx="41" cy="7" r="3.500" fill="#a9c4e4" /></g>,

  navUp: <Triangle rot={0} />, navLeft: <Triangle rot={-90} />, navRight: <Triangle rot={90} />, navDown: <Triangle rot={180} />,
  tiltUp: <path d="M9 9H29L24 14Q40 22 32 34Q27 42 12 41Q26 34 18 22L9 30Z" fill="#7aaae0" stroke="#2d62a3" strokeWidth="1.600" />,
  tiltDown: <path d="M9 39H29L24 34Q40 26 32 14Q27 6 12 7Q26 14 18 26L9 18Z" fill="#7aaae0" stroke="#2d62a3" strokeWidth="1.600" />,
};

const IconSvg = styled.svg<{ $s: number; $dim?: boolean }>`
  width: ${(p) => p.$s}px;
  height: ${(p) => p.$s}px;
  flex: none;
  display: block;
  overflow: visible;
  ${(p) => p.$dim && "opacity:.32;filter:saturate(.5);"}
`;
const Icon = ({ name, size = 48, dim = false }: { name: string; size?: number; dim?: boolean }) => (
  <IconSvg $s={size} $dim={dim} viewBox="0 0 48 48">{art[name]}</IconSvg>
);

/* ---------- toolbars ---------- */

const Window = styled.div`
  width: 2940px; height: 1840px; display: flex; flex-direction: column;
  background: ${C.bg}; overflow: hidden;
`;
const BarRow = styled.div`
  height: 68px; display: flex; flex: none;
`;
const Bar = styled.div<{ $last?: boolean }>`
  height: 67px; display: flex; align-items: center; padding-right: 1px;
  border-top: 1px solid #3a3a3a;
  border-bottom: 2px solid ${C.light};
  ${(p) => (p.$last ? "flex:1;" : `border-right:2px solid ${C.light};margin-right:1px;`)}
`;
const Grip = styled.div`
  width: 24px; height: 52px; padding-left: 6px; display: flex; gap: 1px; flex: none; margin-top: 3px;
  &::before, &::after {
    content: ""; width: 6px; border-right: 2px solid ${C.light}; border-bottom: 2px solid ${C.light};
    box-shadow: inset -1px 0 0 #1a1a1a;
  }
  &::after { width: 5px; }
`;
const ToolButton = styled.div<{ $w: number; $on?: boolean }>`
  width: ${(p) => p.$w}px; height: ${(p) => (p.$w > 50 ? 58 : 44)}px; flex: none;
  display: flex; align-items: center; justify-content: center;
  padding-top: 1px;
  ${(p) => p.$on && "border-top:1px solid #c4c4c4;border-left:1px solid #c4c4c4;background:#2f2f2f;"}
`;
const DropCell = styled.div<{ $off?: boolean }>`
  width: 24px; display: flex; justify-content: center; flex: none;
  &::after {
    content: ""; border: 8px solid transparent; border-bottom: 0;
    border-top: 10px solid ${(p) => (p.$off ? "#232323" : "#e6e6e6")};
  }
`;
const Sep = styled.div<{ $w: number; $h: number }>`
  width: ${(p) => p.$w}px; height: ${(p) => p.$h}px; display: flex; justify-content: center; flex: none;
  &::after { content: ""; width: 2px; background: #b4b4b4; }
`;

type Tool = string;
/* "!" marks a disabled tool, ">" a drop-down arrow, "*" a pressed tool, "|" a separator */
const bars: { tools: Tool[]; last?: boolean }[][] = [
  [
    { tools: ["newFile", "open", "save", "newLayout", "layouts", "style"] },
    { tools: ["*hand", "panSel", "zoomIn", "zoomOut", "zoomFull", "zoomSel", "zoomLayer", "!zoomNative", "zoomLast", "!zoomNext", "newMap", "new3d", "newBookmark", "bookmarks", "clock", "refresh"] },
    { tools: ["!select>", "!form>", "deselect>", "selectLoc>"] },
    { tools: ["identify", "!abacus", "gear", "sigma", "!table>", "ruler>", "tips", "!action>"], last: true },
  ],
  [
    { tools: ["dataSource", "newGpkg", "newShp", "newSpl", "newScratch", "newMesh", "newVirtual"] },
    { tools: ["!pencils", "!pencil", "!saveEdits", "!digitize>", "!movePts", "!vertex>", "!multiedit", "!trash", "!cut", "!copy", "!paste", "!undo", "!redo"] },
    { tools: ["!label", "!diagram", "|", "labelPin", "labelRed", "|", "!labelMove0", "!labelEye", "!labelMove", "!labelRot", "!labelEdit"] },
    { tools: ["metasearch"] },
    { tools: ["python"] },
    { tools: ["help"] },
    { tools: [], last: true },
  ],
  [{ tools: ["!hist1", "!hist2", "!hist3", "!hist4", "!sunUp", "!sunDown", "!conUp", "!conDown", "!gamUp", "!gamDown"], last: true }],
];

const Tools = ({ tools, w, size }: { tools: Tool[]; w: number; size: number }) => (
  <>
    {tools.map((t, i) => {
      if (t === "|") return <Sep key={i} $w={w > 50 ? 11 : 12} $h={w > 50 ? 52 : 36} />;
      const off = t.startsWith("!");
      const on = t.startsWith("*");
      const drop = t.endsWith(">");
      return (
        <React.Fragment key={i}>
          <ToolButton $w={w} $on={on}><Icon name={t.replace(/[!*>]/g, "")} size={size} dim={off} /></ToolButton>
          {drop && <DropCell $off={off} />}
        </React.Fragment>
      );
    })}
  </>
);

/* ---------- docks ---------- */

const Main = styled.div`
  height: 1582px; display: flex; flex: none;
`;
const Dock = styled.div<{ $w: number; $ml?: number }>`
  width: ${(p) => p.$w}px; margin-left: ${(p) => p.$ml ?? 0}px; display: flex; flex-direction: column; flex: none;
`;
const TitleBar = styled.div<{ $pr: number; $h?: number }>`
  height: ${(p) => p.$h ?? 50}px; padding: 0 ${(p) => p.$pr}px 0 4px; display: flex; align-items: center; gap: 14px; flex: none;
  font-size: 22px; white-space: nowrap;
  span { flex: 1; padding-top: 2px; }
`;
const RoundBtn = styled.div`
  width: 28px; height: 28px; border-radius: 50%; display: flex; align-items: center; justify-content: center; flex: none;
  background: radial-gradient(circle, #5a5a5a 0, #4a4a4a 55%, #363636 100%);
`;
const TitleButtons = () => (
  <>
    <RoundBtn>
      <svg width="18" height="18" viewBox="0 0 18 18" fill="none" stroke="#fff" strokeWidth="2"><path d="M6 5V2H16V10H13" /><rect x="2" y="7" width="10" height="7" /></svg>
    </RoundBtn>
    <RoundBtn>
      <svg width="18" height="18" viewBox="0 0 18 18" stroke="#fff" strokeWidth="4"><path d="M3 2.500L15 14.500M15 2.500L3 14.500" /></svg>
    </RoundBtn>
  </>
);
const DockTools = styled.div<{ $pl?: number; $h?: number; $pb?: number }>`
  height: ${(p) => p.$h ?? 54}px; padding-left: ${(p) => p.$pl ?? 3}px; padding-bottom: ${(p) => p.$pb ?? 0}px; display: flex; align-items: center; flex: none;
`;
const Overflow = styled.div`
  flex: 1; padding-left: 22px; font-size: 24px; line-height: 30px; color: #424242;
`;
const Frame = styled.div<{ $h: number; $w: number }>`
  height: ${(p) => p.$h}px; width: ${(p) => p.$w}px; padding: 4px 3px 3px 4px; display: flex; flex: none; ${sunken}
`;
const ListArea = styled.div`
  flex: 1; background: ${C.list}; overflow: hidden; display: flex; flex-direction: column; min-width: 0;
`;

const dotsV = "repeating-linear-gradient(to bottom,#b8b8b8 0 2px,transparent 2px 4px)";
const dotsH = "repeating-linear-gradient(to right,#b8b8b8 0 2px,transparent 2px 4px)";
const Branch = styled.div<{ $w: number; $x: number; $len: number; $end?: boolean; $mid?: string }>`
  width: ${(p) => p.$w}px; align-self: stretch; flex: none; display: flex; align-items: center;
  padding-left: ${(p) => p.$x - 8}px;
  background: ${(p) => `${dotsV} ${p.$x}px 0/2px ${p.$end ? "50%" : "100%"} no-repeat`}
    ${(p) => (p.$len ? `,${dotsH} ${p.$x}px ${p.$mid ?? "18px"}/${p.$len}px 2px no-repeat` : "")};
`;
const Expander = styled.div<{ $minus?: boolean }>`
  width: 18px; height: 18px; border: 2px solid #c0c0c0; flex: none;
  background:
    linear-gradient(#fff,#fff) center/10px 2px no-repeat
    ${(p) => (p.$minus ? "" : ",linear-gradient(#fff,#fff) center/2px 10px no-repeat")},
    ${C.list};
`;
const TreeRow = styled.div<{ $h?: number }>`
  height: ${(p) => p.$h ?? 36}px; display: flex; align-items: center; flex: none; color: #fff; font-size: 26px; white-space: nowrap;
`;
const TreeItem = styled.div<{ $on?: boolean; $ls: number }>`
  height: 36px; width: 371px; display: flex; align-items: center; padding: 0 0 2px 6px; gap: 12px; letter-spacing: ${(p) => p.$ls}px;
  ${(p) => p.$on && "background:#464646;"}
`;

const browser: [string, string, boolean, number?][] = [
  ["folder", "/Volumes", true, 0.1], ["star", "Favorites", false, -0.1], ["bookmarks", "Spatial Bookmarks", true, -0.1], ["home", "Home", true, -0.2],
  ["folder", "/ (Macintosh HD)", true, -0.25], ["gpkg", "GeoPackage", false, -0.2], ["feather", "SpatiaLite", false], ["elephant", "PostgreSQL", false, 0.2],
  ["chip", "SAP HANA", false, -0.35], ["mssql", "MS SQL Server", false, -0.15], ["oracle", "Oracle", false], ["wms", "WMS/WMTS", false, -0.7],
  ["vtiles", "Vector Tiles", false], ["xyz", "XYZ Tiles", true, -0.1], ["wcs", "WCS", false, -0.5], ["wfs", "WFS / OGC API - Features", false, -0.37],
  ["arcgis", "ArcGIS REST Servers", false, -0.42],
];

const Check = styled.div<{ $c: string }>`
  width: 24px; height: 24px; border: 2px solid ${(p) => p.$c}; flex: none; display: flex; align-items: center; justify-content: center;
`;
const Tick = ({ c = "#fff" }: { c?: string }) => (
  <svg width="18" height="18" viewBox="0 0 18 18" fill="none" stroke={c} strokeWidth="4"><path d="M2 8L7 13L16 4" /></svg>
);
const LayerItem = styled.div<{ $on?: boolean }>`
  height: 36px; flex: 1; display: flex; align-items: center; padding: 0 0 1px 7px;
  ${(p) => p.$on && "background:#464646;"}
  ${Check} { margin-right: 14px; }
`;
const LayerName = styled.span<{ $cur?: boolean }>`
  margin: 0 0 2px 15px; font-weight: 700; font-size: 26px;
  ${(p) => (p.$cur ? "letter-spacing:.5px;color:#fff;text-decoration:underline;text-decoration-thickness:2px;text-underline-offset:4px;text-decoration-skip-ink:none;" : "letter-spacing:-.05px;color:#8e8e8e;font-style:italic;")}
`;
const Swatch = styled.div`
  width: 32px; height: 32px; background: #aa5500; margin: 0 12px 0 13px;
`;
const RowText = styled.span<{ $up?: number }>`
  padding-bottom: ${(p) => p.$up ?? 2}px; letter-spacing: -0.1px;
`;
const RampRow = styled.div`
  height: 386px; display: flex; flex: none; color: #000; font-size: 26px; letter-spacing: .5px;
`;
const Ramp = styled.div`
  width: 64px; height: 383px;
  background: linear-gradient(#fde725,#dde318 5%,#addc30 13%,#5ec962 25%,#28ae80 37%,#21918c 50%,#2c728e 62%,#3b528b 75%,#472d7b 88%,#440154);
`;
const RampLabels = styled.div`
  height: 383px; display: flex; flex-direction: column; justify-content: space-between; padding: 1px 0 0 12px; line-height: 32px;
`;
const VScroll = styled.div`
  width: 32px; display: flex; flex-direction: column; flex: none; background: #383838;
`;
const ScrollBtn = styled.div<{ $dir: "up" | "down" | "left" | "right" }>`
  width: 32px; height: 32px; flex: none; display: flex; align-items: center; justify-content: center; ${raised}
  &::after {
    content: ""; border: 7px solid transparent; border-bottom: 7px solid #000; border-top: 0;
    transform: rotate(${(p) => ({ up: 0, down: 180, left: -90, right: 90 })[p.$dir]}deg);
  }
`;
const Thumb = styled.div<{ $w: number; $h: number }>`
  width: ${(p) => p.$w}px; height: ${(p) => p.$h}px; ${raised}
`;
const Spacer = styled.div`flex: 1;`;

const LayerRow = ({ name, open, checked, current }: { name: string; open?: boolean; checked?: boolean; current?: boolean }) => (
  <TreeRow>
    <Branch $w={40} $x={20} $len={18}><Expander $minus={open} /></Branch>
    <LayerItem $on={current}>
      <Check $c={checked ? "#fff" : "#a0a0a0"}>{checked && <Tick />}</Check>
      <Icon name="points" size={28} />
      <LayerName $cur={current}>{name}</LayerName>
    </LayerItem>
  </TreeRow>
);

/* ---------- central views ---------- */

const Center = styled.div`
  width: 2018px; margin-left: 9px; display: flex; flex-direction: column; flex: none;
`;
const ViewRow = styled.div`
  height: 1130px; display: flex; flex: none; background: #fff;
`;
const CameraPanel = styled.div`
  width: 610px; height: 1089px; background: ${C.bg}; border-bottom: 2px solid #050505; padding: 23px 0 0 10px;
`;
const NavGrid = styled.div`
  width: 603px; display: grid; grid-template-columns: 48px 1fr 48px; grid-template-rows: 46px 194px 46px; align-items: center; justify-items: center;
`;
const CheckLine = styled.div`
  display: flex; align-items: center; gap: 12px; margin-top: 16px; padding-left: 2px; font-size: 26px; letter-spacing: -0.22px;
`;
const SunkCheck = styled.div`
  width: 25px; height: 25px; background: ${C.list}; display: flex; align-items: center; justify-content: center; ${sunken}
`;
const MapArea = styled.div`
  height: 347px; display: flex; flex: none; border-left: 4px solid #161616; border-bottom: 3px solid ${C.bg}; background: #fff;
`;
const Drawing = styled.svg`display: block; flex: none;`;

const rng = (seed: number) => () => {
  seed = (seed * 1664525 + 1013904223) >>> 0;
  return seed / 4294967296;
};
const interp = (pts: number[][], x: number) => {
  for (let i = 1; i < pts.length; i++) {
    if (x <= pts[i][0]) {
      const [a, b] = [pts[i - 1], pts[i]];
      return a[1] + ((b[1] - a[1]) * (x - a[0])) / (b[0] - a[0]);
    }
  }
  return pts[pts.length - 1][1];
};
const TOP = [[737, 568], [743, 566], [754, 566], [755, 558], [786, 558], [804, 556], [818, 551], [826, 546], [836, 547], [840, 551], [852, 547], [865, 549], [881, 548], [907, 547], [919, 545], [936, 546], [947, 543], [958, 543], [967, 549], [976, 547], [988, 552], [992, 540], [1001, 537], [1012, 539], [1014, 546], [1024, 545], [1034, 553], [1043, 549], [1049, 544], [1061, 543], [1066, 550], [1076, 554], [1087, 552], [1099, 546], [1122, 544], [1130, 541], [1147, 537], [1160, 539], [1190, 537], [1215, 536], [1241, 535], [1266, 529], [1312, 523], [1338, 517], [1363, 513], [1394, 511], [1445, 511], [1483, 512], [1501, 517], [1537, 519], [1557, 527], [1588, 531], [1608, 541], [1649, 542], [1680, 547], [1708, 549], [1720, 555], [1730, 549], [1738, 557], [1771, 561], [1789, 567], [1822, 569], [1858, 571], [1891, 570], [1899, 565], [1937, 564]];
const BOT = [[737, 583], [785, 585], [800, 584], [839, 583], [907, 581], [980, 584], [1049, 586], [1126, 586], [1190, 588], [1251, 588], [1338, 591], [1368, 594], [1409, 592], [1465, 595], [1496, 597], [1521, 599], [1532, 606], [1550, 602], [1567, 598], [1605, 602], [1639, 604], [1675, 602], [1710, 604], [1782, 604], [1817, 606], [1848, 606], [1879, 609], [1915, 606], [1937, 601]];
const DOTS = [[887, 597], [933, 603], [941, 595], [963, 591], [969, 593], [1021, 591], [1093, 599], [1117, 613], [1033, 651], [1055, 657], [1091, 713], [949, 771], [1146, 593], [1150, 591], [1135, 589], [1165, 590], [933, 583], [891, 586], [872, 582], [1012, 588], [1052, 588], [1565, 621], [1613, 617], [1621, 612], [1941, 580], [1955, 585], [1950, 593], [1732, 542]];
const BLOBS = [[1728, 527, 10, 11], [1716, 532, 16, 8], [1766, 546, 16, 6], [1780, 538, 10, 23], [1784, 546, 36, 6], [1800, 543, 10, 6], [1820, 546, 20, 10], [1840, 544, 21, 14], [1811, 554, 60, 9], [1858, 555, 10, 17], [1949, 560, 9, 8], [1940, 564, 12, 6], [1937, 576, 6, 8], [1950, 582, 11, 6], [1937, 592, 22, 8], [1570, 601, 17, 11], [1598, 601, 22, 7], [1626, 601, 15, 8], [1629, 618, 14, 6], [1639, 613, 7, 17], [1747, 609, 12, 8], [1812, 604, 8, 12], [1468, 595, 6, 9], [1876, 604, 6, 8]];
const HOLES = [[1911, 573, 8, 17], [1890, 581, 4, 4]];
const specks = ["#471063", "#46085c", "#471365", "#481a6c", "#440154", "#460b5e"];

const PointCloud = () => {
  const r = rng(7);
  const cols: React.ReactNode[] = [];
  let j = 0, k = 0;
  for (let x = 737; x < 1938; x += 2) {
    if (r() < 0.28) j = Math.round((r() - 0.5) * 3) * 2 * (r() < 0.5 ? 1 : 0.5);
    if (r() < 0.22) k = r() < 0.2 ? 3 : 0;
    const t = Math.round((interp(TOP, x) + j) / 2) * 2;
    const b = Math.round((interp(BOT, x) + k) / 2) * 2;
    cols.push(<rect key={x} x={x} y={t} width="2.100" height={b - t} />);
  }
  const tex: React.ReactNode[] = [];
  for (let i = 0; i < 1700; i++) {
    const x = 742 + Math.floor(r() * 1185);
    const t = interp(TOP, x) + 4, b = interp(BOT, x) - 8;
    const y = t + r() * (b - t);
    const hot = r() < 0.03 && x > 1350 && x < 1760;
    tex.push(<rect key={i} x={x} y={Math.round(y)} width={2 + Math.floor(r() * 6)} height={2 + Math.floor(r() * 5)} fill={hot ? "#3f4480" : specks[Math.floor(r() * specks.length)]} />);
  }
  return (
    <Drawing width="1408" height="1130" viewBox="596 308 1408 1130" shapeRendering="crispEdges">
      <g fill="#440154">{cols}{BLOBS.map(([x, y, w, h], i) => <rect key={`b${i}`} x={x} y={y} width={w} height={h} />)}</g>
      {tex}
      <g fill="#440154">{DOTS.map(([x, y], i) => <rect key={i} x={x - 3} y={y - 3} width="6" height="6" />)}</g>
      <g fill="#fff">{HOLES.map(([x, y, w, h], i) => <rect key={i} x={x} y={y} width={w} height={h} />)}</g>
      <rect x="970" y="570" width="6" height="6" fill="#414487" />
      <rect x="1500" y="584" width="3" height="5" fill="#21918c" />
      <g shapeRendering="auto">
        <path d="M1824 491L1828 482L1836 483V491Z" fill="#22c422" />
        <path d="M1828 475L1836 483L1830 490L1823 489Z" fill="#3cf53c" />
        <path d="M1828 479L1832 484L1826 488L1824 486Z" fill="#18a818" />
        <path d="M1813 415H1823V494L1817 498L1813 494Z" fill="#0000b0" />
        <path d="M1818 387L1827 415H1809Z" fill="#0000b0" />
        <path d="M1822 490L1898 491V486L1925 496L1898 505V500L1818 498Z" fill="#b00000" />
        <text x="1834.500" y="361" textAnchor="middle" fontFamily="Open Sans, Noto Sans, sans-serif" fontWeight="700" fontSize="24" fill="#d0d0d0">up</text>
        <text x="1850.500" y="459" textAnchor="middle" fontFamily="Open Sans, Noto Sans, sans-serif" fontWeight="700" fontSize="24" fill="#d0d0d0">Y?</text>
      </g>
    </Drawing>
  );
};

const MapPicture = () => {
  const r = rng(31);
  const tex: React.ReactNode[] = [];
  for (let i = 0; i < 2600; i++) {
    const x = 1440 + Math.floor(r() * 275), y = 1487 + Math.floor(r() * 170);
    const v = r();
    tex.push(<rect key={i} x={x} y={y} width={1 + Math.floor(r() * 4)} height={1 + Math.floor(r() * 4)} fill={v < 0.003 ? "#414487" : v < 0.04 ? "#46256f" : specks[Math.floor(r() * specks.length)]} />);
  }
  const accents: [number, number, number, number, string][] = [[1476, 1553, 4, 4, "#3b528b"], [1482, 1641, 4, 4, "#2c728e"], [1505, 1538, 3, 4, "#2a788e"], [1527, 1568, 4, 4, "#414487"], [1556, 1569, 3, 3, "#31688e"], [1653, 1620, 4, 4, "#3b528b"], [1658, 1618, 3, 4, "#21918c"], [1684, 1641, 4, 1, "#bddf26"], [1708, 1499, 1, 1, "#fde725"], [1714, 1484, 4, 4, "#3b528b"], [1715, 1573, 5, 1, "#21918c"], [1622, 1652, 4, 4, "#3f4889"], [1665, 1652, 4, 4, "#414487"], [1521, 1623, 4, 2, "#31688e"]];
  return (
    <Drawing width="2014" height="344" viewBox="600 1438 2014 344" shapeRendering="crispEdges">
      <path d="M1439 1486H1456V1485H1470V1486H1515V1487H1522L1536 1484H1549V1483H1559V1484H1585V1483H1612L1619 1481H1638V1482L1654 1483H1661L1673 1481H1679V1482H1698V1483H1720V1661H1594L1592 1659H1588L1586 1661H1543V1659H1537V1661H1440V1640H1439V1600H1440V1560H1439Z" fill="#440154" />
      {tex}
      {accents.map(([x, y, w, h, f], i) => <rect key={i} x={x} y={y} width={w} height={h} fill={f} />)}
      <path d="M1570 1523H1588V1522H1592V1523H1596V1522H1600V1523H1607V1522H1619L1623 1521H1629V1522L1624 1523L1619 1526H1607L1604 1524H1585V1525H1572Z" fill="#fff" />
      <path d="M1700 1588L1710 1585L1715 1583H1721V1589H1713V1590H1700Z" fill="#fff" />
      <g fill="#fff"><rect x="1655" y="1524" width="1" height="1" /><rect x="1691" y="1589" width="1" height="1" /><rect x="1477" y="1627" width="1" height="1" /></g>
    </Drawing>
  );
};

const Compass = () => (
  <Drawing width="176" height="176" viewBox="-88 -88 176 176">
    <defs>
      <linearGradient id="ring" x1="0" y1="0" x2="1" y2="1"><stop offset=".1" stopColor="#b0b0b0" /><stop offset=".85" stopColor="#484848" /></linearGradient>
    </defs>
    <circle r="82" fill={C.list} stroke="url(#ring)" strokeWidth="8" />
    <g transform="rotate(7.500)">
      <path d="M0-49L8 0H-8Z" fill="#e60000" /><path d="M0-49L8 0H0Z" fill="#ff1a1a" />
      <path d="M0 49L8 0H-8Z" fill="#fff" /><path d="M0 49L-8 0H0Z" fill="#d9d9d9" />
    </g>
    <g fill="#dcdcdc" fontSize="26" fontFamily="Inter, sans-serif" textAnchor="middle">
      <text x="0" y="-50">N</text><text x="0" y="72">S</text><text x="-62" y="11">W</text><text x="58" y="11">E</text>
    </g>
  </Drawing>
);

/* ---------- identify results ---------- */

const TableHead = styled.div`
  height: 42px; display: flex; flex: none; background: ${C.bg}; color: #fff; font-size: 22px; align-items: center;
  border-bottom: 2px solid ${C.light}; box-shadow: 0 1px 0 #000;
`;
const HeadCell = styled.div<{ $w?: number }>`
  height: 40px; padding-left: 7px; display: flex; align-items: center; letter-spacing: -0.25px;
  ${(p) => (p.$w ? `width:${p.$w}px;border-right:2px solid ${C.light};` : "flex:1;")}
`;
const HScroll = styled.div`height: 32px; display: flex; background: #383838; flex: none;`;
const FormLine = styled.div<{ $off?: boolean }>`
  height: 43px; margin-top: ${(p) => (p.$off ? 17 : 10)}px; padding-left: 9px; display: flex; align-items: center; font-size: 26px; white-space: nowrap; flex: none;
  color: ${(p) => (p.$off ? "#6c6c6c" : "#fff")}; letter-spacing: -0.2px;
`;
const Combo = styled.div<{ $w: number; $ml: number; $dark?: boolean; $off?: boolean }>`
  width: ${(p) => p.$w}px; height: 43px; margin-left: ${(p) => p.$ml}px; padding: 5px 4px 4px 9px; display: flex; align-items: center; justify-content: space-between; flex: none;
  color: ${(p) => (p.$off ? "#6c6c6c" : p.$dark ? "#fff" : C.text)};
  background: ${(p) => (p.$dark ? C.list : C.bg)}; ${sunken}
`;
const ComboBtn = styled.div<{ $off?: boolean }>`
  width: 32px; height: 34px; display: flex; align-items: center; justify-content: center; flex: none; ${raised}
  &::after { content: ""; border: 6.5px solid transparent; border-bottom: 0; border-top: 8px solid ${(p) => (p.$off ? "#222" : "#000")}; }
`;

/* ---------- status bar ---------- */

const Status = styled.div`
  height: 54px; display: flex; align-items: center; padding: 2px 0 0 8px; color: #fff; font-size: 22px; white-space: nowrap; flex: none;
`;
const Locator = styled.div`
  width: 427px; height: 43px; display: flex; align-items: center; padding-left: 16px; gap: 16px; background: ${C.list};
  color: #8f8f8f; font-size: 25.5px; flex: none; ${sunken}
`;
const Label = styled.div<{ $x: number; $dim?: boolean }>`
  width: ${(p) => p.$x}px; flex: none; ${(p) => p.$dim && `color:${C.text};`}
`;
const Field = styled.div<{ $w: number; $h?: number; $center?: boolean }>`
  width: ${(p) => p.$w}px; height: ${(p) => p.$h ?? 43}px; display: flex; align-items: center; flex: none;
  justify-content: ${(p) => (p.$center ? "center" : "space-between")}; padding: 4px 4px 4px ${(p) => (p.$center ? 3 : 9)}px; background: ${C.list}; ${sunken}
  ${(p) => p.$center && "letter-spacing:.65px;"}
`;
const Spin = styled.div`
  display: flex; flex-direction: column; gap: 1px; flex: none;
`;
const SpinBtn = styled.div<{ $up?: boolean }>`
  width: 31px; height: 17px; display: flex; align-items: center; justify-content: center; ${raised}
  &::after { content: ""; border: 3px solid transparent; ${(p) => (p.$up ? "border-top:0;border-bottom:3px solid #000;" : "border-bottom:0;border-top:3px solid #000;")} }
`;
const Slot = styled.div<{ $w: number }>`
  width: ${(p) => p.$w}px; display: flex; justify-content: center; align-items: center; flex: none;
`;
const Spinner = () => <Spin><SpinBtn $up /><SpinBtn /></Spin>;

export default function App() {
  return (
    <Window>
      <Global />
      {bars.map((row, i) => (
        <BarRow key={i}>
          {row.map((b, j) => (
            <Bar key={j} $last={b.last}>
              <Grip />
              <Tools tools={b.tools} w={62} size={48} />
            </Bar>
          ))}
        </BarRow>
      ))}
      <Main>
        <Dock $w={587}>
          <TitleBar $pr={7}><span>Browser</span><TitleButtons /></TitleBar>
          <DockTools><Tools tools={["addLayer", "refresh", "funnel", "collapse", "infoBig"]} w={46} size={32} /></DockTools>
          <Frame $h={773} $w={587}>
            <ListArea>
              {browser.map(([icon, name, exp, ls], i) => (
                <TreeRow key={name}>
                  <Branch $w={32} $x={16} $len={14} $end={i === browser.length - 1}>{exp && <Expander />}</Branch>
                  <TreeItem $on={name === "WCS"} $ls={ls ?? -0.1}><Icon name={icon} size={32} />{name}</TreeItem>
                </TreeRow>
              ))}
            </ListArea>
          </Frame>
          <TitleBar $pr={7} $h={68}><span>Layers</span><TitleButtons /></TitleBar>
          <DockTools $h={45} $pb={6}>
            <Tools tools={["brush", "addGroup", "eye", "funnelMenu", "!epsilon>", "expand", "collapse", "removeLayer"]} w={46} size={32} />
          </DockTools>
          <Frame $h={592} $w={587}>
            <ListArea>
              <LayerRow name="ground.copc" open />
              <TreeRow>
                <Branch $w={44} $x={20} $len={0} />
                <Branch $w={43} $x={16} $len={18} $end />
                <Check $c="#fff"><Tick /></Check><Swatch /><RowText>Ground</RowText>
              </TreeRow>
              <LayerRow name="denoised-ground-only.copc" />
              <LayerRow name="CSite1_orig-utm" open checked current />
              <TreeRow $h={34}>
                <Branch $w={44} $x={20} $len={0} />
                <Branch $w={42} $x={16} $len={20} $mid="16px" />
                <RowText $up={3}>Intensity</RowText>
              </TreeRow>
              <RampRow>
                <Branch $w={44} $x={20} $len={0} />
                <Branch $w={42} $x={16} $len={18} $end $mid="192px" />
                <Ramp /><RampLabels><span>7,395</span><span>0</span></RampLabels>
              </RampRow>
              <LayerRow name="denoised-ground-only" />
            </ListArea>
            <VScroll>
              <ScrollBtn $dir="up" /><Thumb $w={32} $h={286} /><Spacer /><ScrollBtn $dir="down" />
            </VScroll>
          </Frame>
        </Dock>

        <Center>
          <TitleBar $pr={4}><span>3D Map 5</span><TitleButtons /></TitleBar>
          <DockTools $pl={4}>
            <Tools tools={["*hand", "zoomFull", "*compassTool", "|", "identify", "ruler", "play", "saveImg", "cube", "|", "eye", "|", "wrench", "*dock"]} w={46} size={32} />
          </DockTools>
          <ViewRow>
            <PointCloud />
            <CameraPanel>
              <NavGrid>
                <Icon name="navUp" size={32} /><Icon name="tiltUp" size={32} /><Icon name="zoomIn" size={32} />
                <Icon name="navLeft" size={32} /><Compass /><Icon name="navRight" size={32} />
                <Icon name="navDown" size={32} /><Icon name="tiltDown" size={32} /><Icon name="zoomOut" size={32} />
              </NavGrid>
              <CheckLine><SunkCheck />Show camera info (for debugging)</CheckLine>
            </CameraPanel>
          </ViewRow>
          <MapArea><MapPicture /></MapArea>
        </Center>

        <Dock $w={313} $ml={13}>
          <TitleBar $pr={8}><span>Identify Results</span><TitleButtons /></TitleBar>
          <DockTools $pl={2}>
            <Tools tools={["!idForm", "|", "expand", "collapse", "expandNew", "|", "deselect", "|"]} w={46} size={32} />
            <Overflow>»</Overflow>
          </DockTools>
          <Frame $h={1348} $w={313}>
            <ListArea>
              <TableHead><HeadCell $w={199}>Feature</HeadCell><HeadCell>Value</HeadCell></TableHead>
              <Spacer />
              <HScroll>
                <ScrollBtn $dir="left" /><Thumb $w={184} $h={32} /><Spacer /><ScrollBtn $dir="right" />
              </HScroll>
            </ListArea>
          </Frame>
          <FormLine><Slot $w={69}>Mode</Slot><Combo $w={211} $ml={13}>Current Layer<ComboBtn /></Combo></FormLine>
          <FormLine $off><Slot $w={59}>View</Slot><Combo $w={161} $ml={13} $off>Tree<ComboBtn $off /></Combo></FormLine>
        </Dock>
      </Main>
      <Status>
        <Locator>
          <svg width="28" height="28" viewBox="0 0 28 28" fill="none" stroke="#8f8f8f" strokeWidth="2.400"><circle cx="12" cy="11" r="9" /><path d="M18 18L25 25" /></svg>
          Type to locate (⌘K)
        </Locator>
        <Slot $w={749} />
        <Label $x={123}>Coordinate</Label>
        <Field $w={220} $h={40} $center>512315,5404223</Field>
        <Slot $w={46}>
          <svg width="30" height="34" viewBox="0 0 30 34">
            <g transform="rotate(-28 15 17)">
              <rect x="9" y="2" width="12" height="30" rx="6" fill="#f4f4f4" stroke="#000" strokeWidth="2" />
              <path d="M12 3V14M16 3V14M9 17H21" stroke="#000" strokeWidth="2" /><circle cx="15" cy="25" r="3.500" fill="none" stroke="#000" strokeWidth="2" />
            </g>
            <path d="M22 8l2-3M26 10l3-1M2 25l2-1" stroke="#000" strokeWidth="2" />
          </svg>
        </Slot>
        <Slot $w={19} />
        <Label $x={65}>Scale</Label>
        <Combo $w={188} $ml={0} $dark>1:45052<ComboBtn /></Combo>
        <Slot $w={66}>
          <svg width="26" height="32" viewBox="0 0 26 32"><path d="M6 16V9Q6 3 13 3T20 9V16" fill="none" stroke="#bdbdbd" strokeWidth="3.600" /><rect x="1" y="14" width="24" height="17" rx="2" fill="#6b6b6b" /></svg>
        </Slot>
        <Label $x={105}>Magnifier</Label>
        <Field $w={185}>100%<Spinner /></Field>
        <Slot $w={19} />
        <Label $x={106}>Rotation</Label>
        <Field $w={185}>0.0 °<Spinner /></Field>
        <Slot $w={13} />
        <SunkCheck><Tick c="#eee" /></SunkCheck>
        <Slot $w={10} />
        <Label $x={107} $dim>Render</Label>
        <Slot $w={36}>
          <svg width="30" height="30" viewBox="0 0 48 48"><circle cx="24" cy="24" r="22" fill="#bbb" /><Globe r={22} c="#444" /></svg>
        </Slot>
        <Label $x={188} $dim>Unknown CRS</Label>
        <svg width="36" height="32" viewBox="0 0 36 32"><path d="M18 1C28 1 34 6 34 13C34 20 30 23 28 24Q28 29 32 31Q24 31 21 26C9 27 2 21 2 13C2 6 8 1 18 1Z" fill="#6e6e6e" /></svg>
      </Status>
    </Window>
  );
}
